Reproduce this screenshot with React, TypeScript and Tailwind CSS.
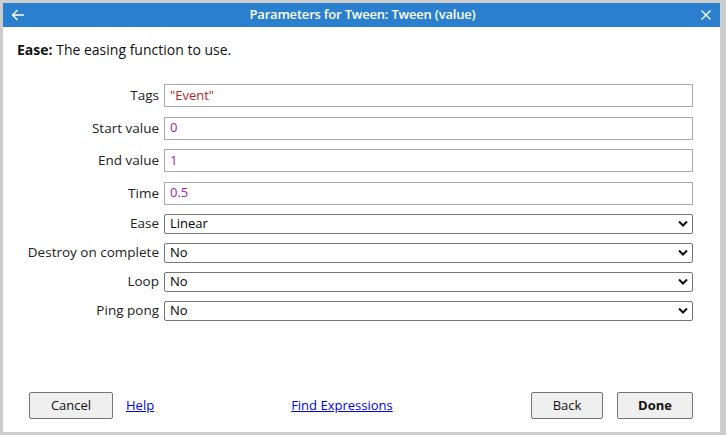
import React from "react";

const font = { fontFamily: '"Open Sans", "Noto Sans", Arial, sans-serif' };

function TextRow({ label, value, color }: { label: string; value: string; color: string }) {
  return (
    <div className="flex items-center h-[23px]">
      <div className="w-[136px] text-right text-[13.5px] text-[#222]">{label}</div>
      <div className="ml-[5px] flex-1 h-full border border-[#a9a9a9] flex items-center pl-[5px] text-[13px]">
        <span className={color}>{value}</span>
      </div>
    </div>
  );
}

function SelectRow({ label, value }: { label: string; value: string }) {
  return (
    <div className="flex items-center h-[20px]">
      <div className="w-[136px] text-right text-[13.5px] text-[#222]">{label}</div>
      <div className="ml-[5px] flex-1 h-full border border-[#767676] rounded-[2px] flex items-center justify-between pl-[5px] pr-[4px] text-[13px] text-black">
        <span>{value}</span>
        <svg width="10" height="7" viewBox="0 0 10 7">
          <path d="M1 1.5 L5 5.5 L9 1.5" fill="none" stroke="#111" strokeWidth="2" />
        </svg>
      </div>
    </div>
  );
}

export default function App() {
  return (
    <div className="w-[726px] h-[435px] bg-[#cdcdcd] pl-[3px] pt-[3px] pr-[6px] pb-[3px]" style={font}>
      <div className="h-full bg-white flex flex-col">
        {/* title bar */}
        <div className="h-[24px] bg-[#2a7fcf] flex items-center justify-between px-[7px] text-white">
          <svg width="16" height="16" viewBox="0 0 16 16">
            <path d="M14 8 H2.5 M7.5 3 L2.5 8 L7.5 13" fill="none" stroke="white" strokeWidth="1.4" />
          </svg>
          <span className="text-[13px] font-semibold tracking-[-0.2px]">Parameters for Tween: Tween (value)</span>
          <svg width="14" height="14" viewBox="0 0 14 14">
            <path d="M2.5 2.5 L11.5 11.5 M11.5 2.5 L2.5 11.5" fill="none" stroke="white" strokeWidth="1.4" />
          </svg>
        </div>

        <p className="mt-[12px] ml-[14px] text-[14px] text-[#111]">
          <span className="font-bold">Ease:</span> The easing function to use.
        </p>

        <div className="mt-[24px] pl-[20px] pr-[27px] flex flex-col">
          <div className="flex flex-col gap-[9.5px]">
            <TextRow label="Tags" value={'"Event"'} color="text-[#b3262b]" />
            <TextRow label="Start value" value="0" color="text-[#a321a8]" />
            <TextRow label="End value" value="1" color="text-[#a321a8]" />
            <TextRow label="Time" value="0.5" color="text-[#a321a8]" />
          </div>
          <div className="mt-[9px] flex flex-col gap-[9px]">
            <SelectRow label="Ease" value="Linear" />
            <SelectRow label="Destroy on complete" value="No" />
            <SelectRow label="Loop" value="No" />
            <SelectRow label="Ping pong" value="No" />
          </div>
        </div>

        <div className="mt-auto mb-[13px] pl-[26px] pr-[27px] flex items-center text-[13px]">
          <button className="w-[84px] h-[27px] bg-[#efefef] border border-[#767676] rounded-[2px] text-[#111]">
            Cancel
          </button>
          <a className="ml-[13px] text-[#0000ee] underline">Help</a>
          <a className="ml-[137px] text-[#0000ee] underline">Find Expressions</a>
          <div className="ml-auto flex gap-[14px]">
            <button className="w-[72px] h-[27px] bg-[#efefef] border border-[#767676] rounded-[2px] text-[#111]">
              Back
            </button>
            <button className="w-[76px] h-[27px] bg-[#efefef] border border-[#767676] rounded-[2px] text-[#111] font-bold">
              Done
            </button>
          </div>
        </div>
      </div>
    </div>
  );
}
